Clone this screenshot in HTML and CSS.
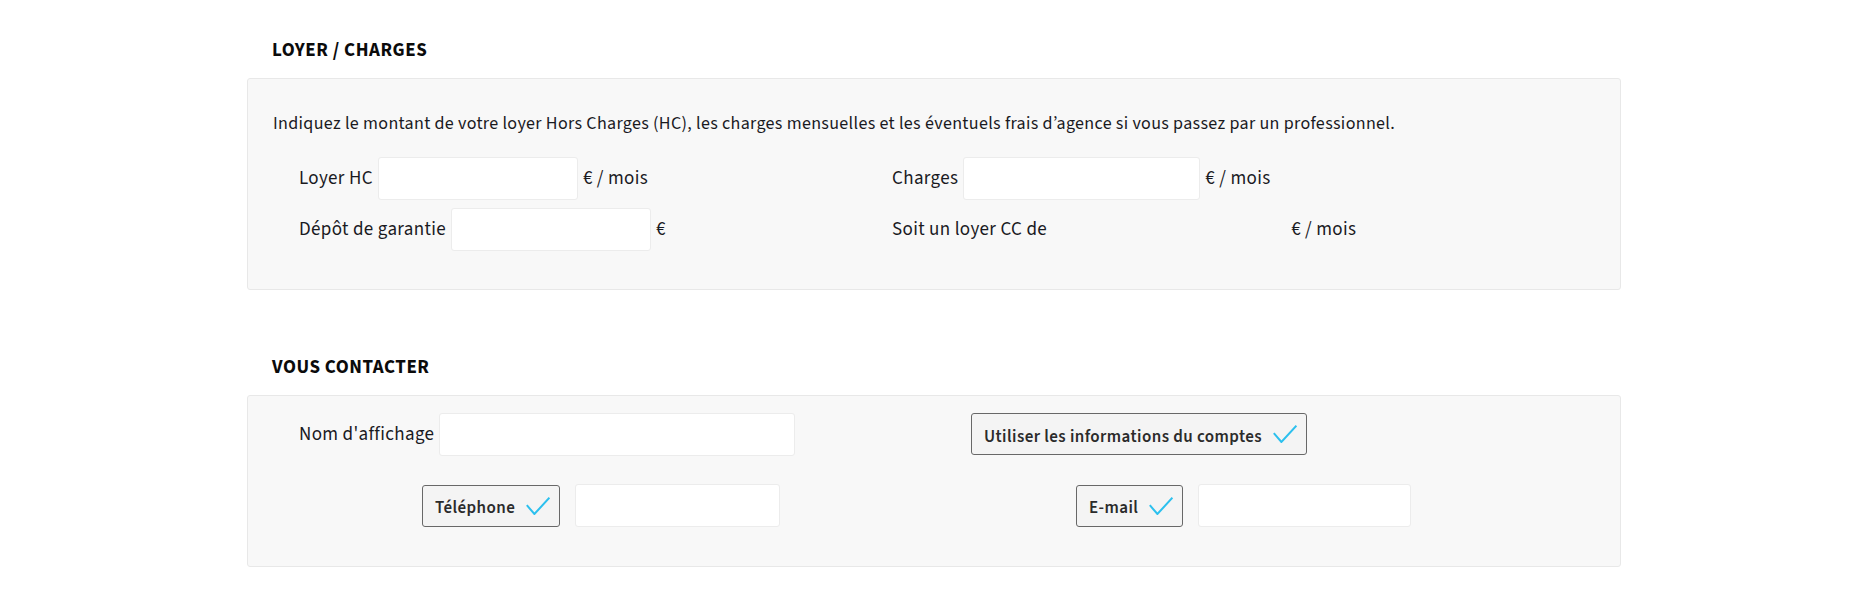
FILE: index.html
```html
<!DOCTYPE html>
<html lang="fr">
<head>
<meta charset="utf-8">
<title>Loyer / Charges</title>
<link rel="stylesheet" href="styles.css">
</head>
<body>
<main class="page">
  <section class="section">
    <h2 class="section-title">LOYER / CHARGES</h2>
    <div class="panel panel-loyer">
      <p class="intro">Indiquez le montant de votre loyer Hors Charges (HC), les charges mensuelles et les éventuels frais d’agence si vous passez par un professionnel.</p>
      <div class="fields">
        <div class="field">
          <label class="field-label">Loyer HC</label>
          <input class="field-input w-loyer" type="text">
          <span class="unit">€ / mois</span>
        </div>
        <div class="field">
          <label class="field-label">Charges</label>
          <input class="field-input w-charges" type="text">
          <span class="unit">€ / mois</span>
        </div>
        <div class="field">
          <label class="field-label">Dépôt de garantie</label>
          <input class="field-input w-depot" type="text">
          <span class="unit">€</span>
        </div>
        <div class="field">
          <span class="field-label">Soit un loyer CC de</span>
          <span class="field-value"></span>
          <span class="unit">€ / mois</span>
        </div>
      </div>
    </div>
  </section>

  <section class="section section-contact">
    <h2 class="section-title">VOUS CONTACTER</h2>
    <div class="panel panel-contact">
      <div class="fields contact-fields">
        <div class="field">
          <label class="field-label">Nom d'affichage</label>
          <input class="field-input w-nom" type="text">
        </div>
        <div class="field off-account">
          <button class="toggle" type="button"><span class="toggle-text">Utiliser les informations du comptes</span>
            <svg class="check" viewBox="0 0 24 18" width="24" height="18"><path d="M0.8 8.2 L8.4 17 L23.4 0.8"/></svg>
          </button>
        </div>
        <div class="field off-phone">
          <button class="toggle" type="button"><span class="toggle-text">Téléphone</span>
            <svg class="check" viewBox="0 0 24 18" width="24" height="18"><path d="M0.8 8.2 L8.4 17 L23.4 0.8"/></svg>
          </button>
          <input class="field-input w-phone" type="text">
        </div>
        <div class="field off-mail">
          <button class="toggle" type="button"><span class="toggle-text">E-mail</span>
            <svg class="check" viewBox="0 0 24 18" width="24" height="18"><path d="M0.8 8.2 L8.4 17 L23.4 0.8"/></svg>
          </button>
          <input class="field-input w-mail" type="text">
        </div>
      </div>
    </div>
  </section>
</main>
</body>
</html>
```

FILE: styles.css
```css
* { box-sizing: border-box; }
html, body { margin: 0; background: #fff; }
body {
  font-family: "Source Sans 3", "Source Sans Pro", Lato, sans-serif;
  font-size: 18px;
  letter-spacing: 0.33px;
  color: #1a1a1f;
}
.page { width: 1374px; margin-left: 247px; padding-top: 39px; }
.section-title {
  margin: 0 0 15px;
  padding-left: 25px;
  font-size: 19px;
  line-height: 24px;
  font-weight: 700;
  letter-spacing: 0.53px;
  color: #0b0b0b;
}
.section-contact { margin-top: 66px; }
.panel {
  background: #f8f8f8;
  border: 1px solid #e8e8e8;
  border-radius: 3px;
}
.panel-loyer { padding: 33px 25px 38px; }
.panel-contact { padding: 17px 25px 39px; }
.intro { margin: 0 0 21px; line-height: 24px; }
.fields {
  display: grid;
  grid-template-columns: 593px 1fr;
  row-gap: 8px;
  padding-left: 26px;
  font-size: 19px;
  letter-spacing: 0.35px;
}
.contact-fields { row-gap: 28px; }
.field {
  display: flex;
  align-items: center;
  gap: 5px;
  height: 43px;
  white-space: nowrap;
}
.field-input {
  height: 43px;
  border: 1px solid #ececec;
  border-radius: 3px;
  background: #fff;
  font: inherit;
}
.w-loyer { width: 200px; }
.w-depot { width: 200px; }
.w-charges { width: 237px; }
.w-nom { width: 356px; }
.w-phone { width: 205px; }
.w-mail { width: 213px; }
.field-value { width: 234px; }
.off-account { margin-left: 79px; align-items: flex-start; }
.off-phone { margin-left: 123px; gap: 15px; }
.off-mail { margin-left: 184px; gap: 15px; }
.toggle {
  display: inline-flex;
  align-items: center;
  gap: 11px;
  height: 42px;
  padding: 0 9px 0 12px;
  border: 1px solid #686868;
  border-radius: 3px;
  background: #f4f4f4;
  color: #2b2b2b;
  font-family: "Source Sans 3", "Source Sans Pro", Lato, sans-serif;
  font-size: 17px;
  font-weight: 600;
  letter-spacing: 0.42px;
}
.toggle-text { padding-top: 5px; }
.check { fill: none; stroke: #2cc0ee; stroke-width: 2; }
```
